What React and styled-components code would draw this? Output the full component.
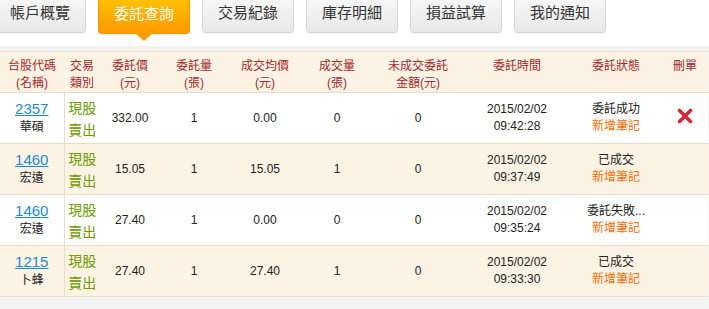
import styled, { createGlobalStyle } from 'styled-components';

const GlobalStyle = createGlobalStyle`
  body {
    margin: 0;
    background: #fff;
    font-family: "Liberation Sans", "Noto Sans CJK TC", sans-serif;
    overflow: hidden;
  }
`

const Page = styled.div`
  width: 709px;
`

const TabBar = styled.div`
  display: flex;
  gap: 12px;
  margin-left: -6px;
  height: 46px;
`

const Tab = styled.div`
  position: relative;
  width: 92px;
  height: ${p => (p.$active ? '34px' : '33px')};
  box-sizing: border-box;
  display: flex;
  align-items: center;
  justify-content: center;
  padding-bottom: 9px;
  font-size: 15px;
  font-family: "Noto Sans CJK TC", sans-serif;
  color: ${p => (p.$active ? '#fff' : '#333')};
  background: ${p => (p.$active
    ? 'linear-gradient(#ffc000, #ff9a00)'
    : 'linear-gradient(#f6f6f6, #e8e8e8)')};
  border: 1px solid ${p => (p.$active ? '#f59a00' : '#d6d6d6')};
  border-top: none;
  border-radius: 0 0 4px 4px;
  box-shadow: 0 1px 1px rgba(0, 0, 0, 0.06);

  &::after {
    content: '';
    display: ${p => (p.$active ? 'block' : 'none')};
    position: absolute;
    left: 50%;
    bottom: -8px;
    margin-left: -9px;
    border-left: 9px solid transparent;
    border-right: 9px solid transparent;
    border-top: 8px solid #ff9a00;
  }
`

const Panel = styled.div`
  background: #f3f3f3;
  padding: 5px 1px 14px 0;
`

const Table = styled.table`
  width: 708px;
  border-collapse: collapse;
  table-layout: fixed;
  background: #fff;
`

const HeadCell = styled.th`
  height: 40px;
  padding: 6px 0 0;
  vertical-align: top;
  text-align: center;
  font-weight: normal;
  font-size: 12px;
  line-height: 17px;
  color: #a3262a;
  background: #fdf3e5;
  border-top: 1px solid #efe3d3;
  border-bottom: 1px solid #e6d8c6;
  box-sizing: border-box;
`

const Row = styled.tr`
  background: ${p => (p.$alt ? '#fdf3e5' : '#fff')};
  border-bottom: 1px solid #eadccb;
`

const Cell = styled.td`
  height: 50px;
  padding: 0;
  text-align: center;
  vertical-align: middle;
  font-size: 12px;
  line-height: 17px;
  color: #222;
  border-right: ${p => (p.$divider ? '1px solid #eadccb' : 'none')};
`

const Code = styled.a`
  display: block;
  font-size: 15px;
  line-height: 17px;
  color: #1a8ad4;
  text-decoration: underline;
  margin-bottom: 2px;
`

const Name = styled.div`
  font-size: 12px;
  line-height: 17px;
  color: #222;
`

const TradeType = styled.div`
  font-size: 14px;
  line-height: 22px;
  color: #6e9b00;
  font-family: "Noto Sans CJK TC", sans-serif;
`

const Note = styled.div`
  color: #ff6a00;
`

const DeleteButton = styled.button`
  border: none;
  background: none;
  padding: 0;
  cursor: pointer;
  display: inline-flex;
`

const CloseIcon = () => (
  <svg width="16" height="16" viewBox="0 0 16 16">
    <path d="M2.5 2.5 L13.5 13.5 M13.5 2.5 L2.5 13.5" stroke="#d02a37" strokeWidth="3.6" strokeLinecap="round" />
  </svg>
)

const tabs = ['帳戶概覽', '委託查詢', '交易紀錄', '庫存明細', '損益試算', '我的通知']

const widths = [64, 36, 60, 68, 74, 70, 92, 106, 92, 46]

const headers = [
  ['台股代碼', '(名稱)'],
  ['交易', '類別'],
  ['委託價', '(元)'],
  ['委託量', '(張)'],
  ['成交均價', '(元)'],
  ['成交量', '(張)'],
  ['未成交委託', '金額(元)'],
  ['委託時間'],
  ['委託狀態'],
  ['刪單'],
]

const orders = [
  { code: '2357', name: '華碩', price: '332.00', qty: '1', avg: '0.00', filled: '0', rest: '0', date: '2015/02/02', time: '09:42:28', status: '委託成功', cancel: true },
  { code: '1460', name: '宏遠', price: '15.05', qty: '1', avg: '15.05', filled: '1', rest: '0', date: '2015/02/02', time: '09:37:49', status: '已成交' },
  { code: '1460', name: '宏遠', price: '27.40', qty: '1', avg: '0.00', filled: '0', rest: '0', date: '2015/02/02', time: '09:35:24', status: '委託失敗...' },
  { code: '1215', name: '卜蜂', price: '27.40', qty: '1', avg: '27.40', filled: '1', rest: '0', date: '2015/02/02', time: '09:33:30', status: '已成交' },
]

const App = () => {
  return (
    <Page>
      <GlobalStyle />
      <TabBar>
        {tabs.map((t, i) => (
          <Tab key={t} $active={i === 1}>{t}</Tab>
        ))}
      </TabBar>
      <Panel>
        <Table>
          <colgroup>
            {widths.map((w, i) => <col key={i} style={{ width: w }} />)}
          </colgroup>
          <thead>
            <tr>
              {headers.map((h, i) => (
                <HeadCell key={i}>
                  {h.map((line, j) => <div key={j}>{line}</div>)}
                </HeadCell>
              ))}
            </tr>
          </thead>
          <tbody>
            {orders.map((o, i) => (
              <Row key={i} $alt={i % 2 === 1}>
                <Cell $divider>
                  <Code>{o.code}</Code>
                  <Name>{o.name}</Name>
                </Cell>
                <Cell>
                  <TradeType>現股</TradeType>
                  <TradeType>賣出</TradeType>
                </Cell>
                <Cell>{o.price}</Cell>
                <Cell>{o.qty}</Cell>
                <Cell>{o.avg}</Cell>
                <Cell>{o.filled}</Cell>
                <Cell>{o.rest}</Cell>
                <Cell>
                  <div>{o.date}</div>
                  <div>{o.time}</div>
                </Cell>
                <Cell>
                  <div>{o.status}</div>
                  <Note>新增筆記</Note>
                </Cell>
                <Cell>
                  {o.cancel && (
                    <DeleteButton aria-label="刪單"><CloseIcon /></DeleteButton>
                  )}
                </Cell>
              </Row>
            ))}
          </tbody>
        </Table>
      </Panel>
    </Page>
  )
}

export default App
